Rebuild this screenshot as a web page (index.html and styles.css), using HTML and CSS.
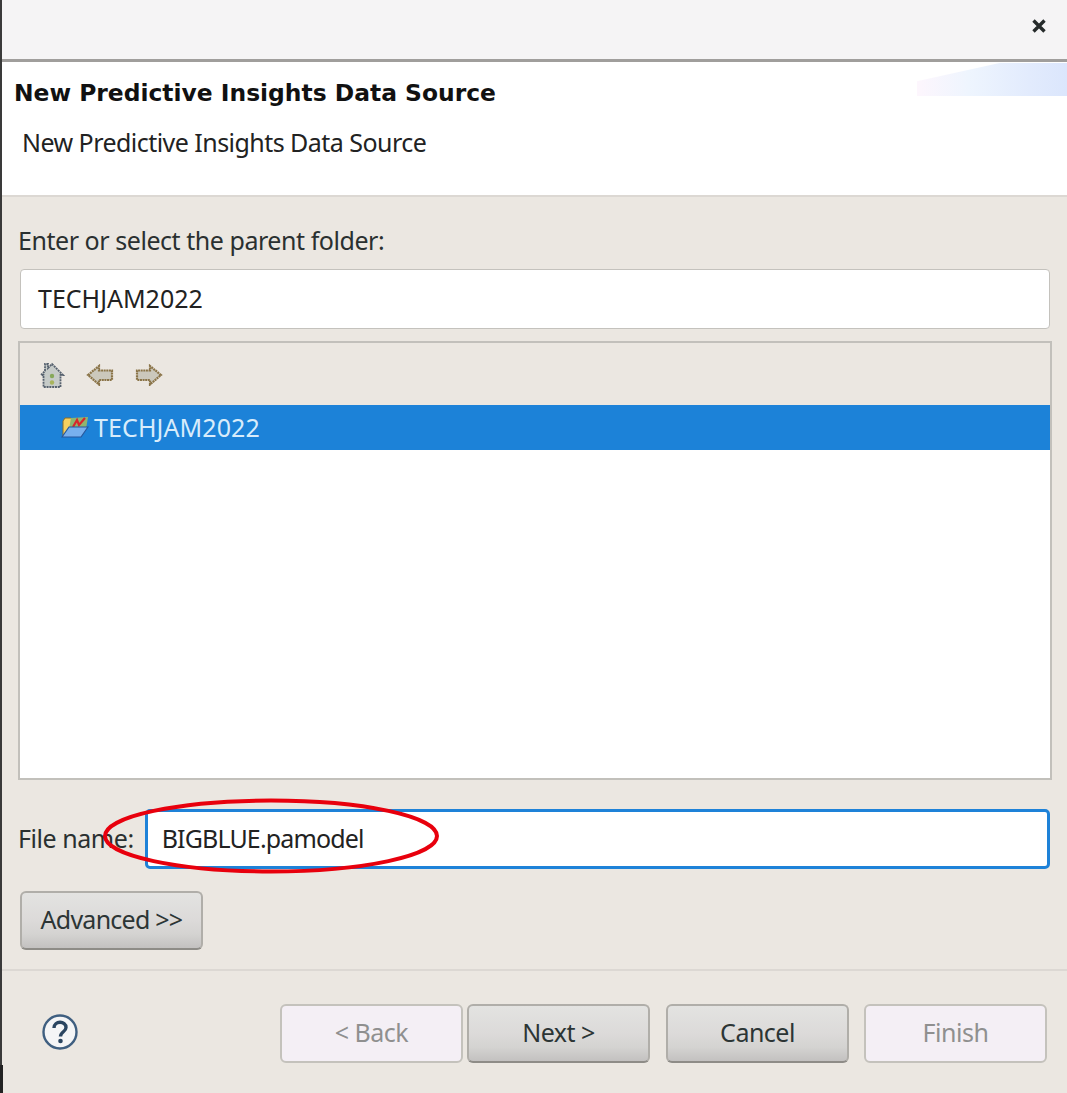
FILE: index.html
```html
<!DOCTYPE html>
<html lang="en">
<head>
    <meta charset="UTF-8">
    <meta name="viewport" content="width=device-width, initial-scale=1.0">
    <title>New Predictive Insights Data Source</title>
    <link rel="stylesheet" href="styles.css">
</head>
<body>
    <div class="dialog">
        <div class="titlebar">
            <svg class="close" width="16" height="16" viewBox="0 0 16 16">
                <path d="M2.5 2.5 L13.5 13.5 M13.5 2.5 L2.5 13.5" stroke="#262b2b" stroke-width="3.4" fill="none"/>
            </svg>
        </div>

        <div class="banner">
            <div class="banner-art"></div>
            <h1>New Predictive Insights Data Source</h1>
            <p>New Predictive Insights Data Source</p>
        </div>

        <div class="content">
            <label class="parent-label">Enter or select the parent folder:</label>
            <div class="field parent-field">TECHJAM2022</div>

            <div class="tree">
                <div class="tree-toolbar">
                    <svg width="26" height="28" viewBox="0 0 26 28">
                        <path d="M13 3 L24 14 L21.5 14 L21.5 26 L4.5 26 L4.5 14 L2 14 L6 10 L6 3 L9 3 L9 7 Z" fill="#c6cbc8" stroke="#56616e" stroke-width="1.8" stroke-dasharray="2 .8"/>
                        <circle cx="13" cy="15" r="2.2" fill="#86a85a"/>
                        <circle cx="13" cy="21.5" r="2.2" fill="#a8b45c"/>
                    </svg>
                    <svg width="28" height="22" viewBox="0 0 28 22">
                        <path d="M2 11 L13 2 L13 6.5 L26 6.5 L26 16 L13 16 L13 20.5 Z" fill="#cbc8bc" stroke="#8a7448" stroke-width="2.2" stroke-dasharray="2 .6"/>
                    </svg>
                    <svg width="28" height="22" viewBox="0 0 28 22">
                        <path d="M26 11 L15 2 L15 6.5 L2 6.5 L2 16 L15 16 L15 20.5 Z" fill="#cbc8bc" stroke="#8a7448" stroke-width="2.2" stroke-dasharray="2 .6"/>
                    </svg>
                </div>
                <div class="tree-row">
                    <svg width="28" height="22" viewBox="0 0 28 22">
                        <path d="M2 20 L2 5 L4 2 L10 2 L12 4 L22 4 L22 10 L10 10 Z" fill="#f5d060" stroke="#8a6d28" stroke-width="1"/>
                        <path d="M10 2 L27 1 L25 13 L8 13 Z" fill="#8fb56f"/>
                        <path d="M12 11 L16 4 L18 9 L24 2" fill="none" stroke="#d8262c" stroke-width="2.2"/>
                        <path d="M1 21 L8 11 L27 11 L20 21 Z" fill="#78b0ee" stroke="#27579c" stroke-width="1.2"/>
                    </svg>
                    <span>TECHJAM2022</span>
                </div>
                <div class="tree-body"></div>
            </div>

            <div class="file-row">
                <label>File name:</label>
                <div class="field file-field">BIGBLUE.pamodel</div>
            </div>

            <button class="btn advanced" type="button">Advanced &gt;&gt;</button>
        </div>

        <div class="footer">
            <svg class="help" width="38" height="38" viewBox="0 0 38 38">
                <circle cx="19" cy="19" r="16.5" fill="#f4f5f6" stroke="#3f5f80" stroke-width="2.4"/>
                <path d="M13 15 C13 7.5 25 7.5 25 14.5 C25 19 19.5 18.5 19.5 23.5" fill="none" stroke="#2a4560" stroke-width="3.4"/>
                <circle cx="19.5" cy="28" r="2.3" fill="#2a4560"/>
            </svg>
            <div class="buttons">
                <button class="btn" type="button" disabled>&lt; Back</button>
                <button class="btn" type="button">Next &gt;</button>
                <button class="btn cancel" type="button">Cancel</button>
                <button class="btn" type="button" disabled>Finish</button>
            </div>
        </div>

        <svg class="callout" width="340" height="82" viewBox="0 0 340 82">
            <ellipse cx="170" cy="41" rx="166" ry="35.5" fill="none" stroke="#e8000d" stroke-width="4"/>
        </svg>
    </div>
</body>
</html>
```

FILE: styles.css
```css
* {
    box-sizing: border-box;
}

html, body {
    margin: 0;
    height: 100%;
}

body {
    font-family: "Noto Sans", sans-serif;
    font-size: 25px;
    letter-spacing: -0.45px;
    color: #2a3030;
    background-color: #ebe7e1;
    overflow: hidden;
}

.dialog {
    position: relative;
    height: 1093px;
    border-left: 2px solid #3a3a3a;
    background-color: #ebe7e1;
}

.dialog::after {
    content: "";
    position: absolute;
    left: -2px;
    top: 1065px;
    width: 3px;
    height: 28px;
    background-color: #222;
}

.titlebar {
    display: flex;
    justify-content: flex-end;
    align-items: center;
    height: 62px;
    padding: 0 20px 7px 0;
    background-color: #f5f4f5;
    border-bottom: 3px solid #a09e9c;
}

.banner {
    position: relative;
    height: 135px;
    padding-left: 12px;
    background-color: #fff;
    border-bottom: 2px solid #dcd8d3;
}

.banner-art {
    position: absolute;
    top: 1px;
    right: 0;
    width: 150px;
    height: 33px;
    background: linear-gradient(90deg, #fdf6fd, #eef5fe 35%, #e2ebfd 75%, #dbe6fc);
    clip-path: polygon(0 55%, 55% 0, 100% 0, 100% 100%, 0 100%);
}

.banner h1 {
    margin: 0;
    padding-top: 15px;
    font-family: "DejaVu Sans", sans-serif;
    font-size: 23.4px;
    line-height: 32px;
    font-weight: bold;
    letter-spacing: 0;
    color: #111;
}

.banner p {
    margin: 0;
    padding: 16px 0 0 8px;
    line-height: 34px;
    letter-spacing: -0.54px;
    color: #222;
}

.content {
    padding: 0 15px 0 16px;
    height: 774px;
    border-bottom: 2px solid #dcd8d3;
}

.parent-label {
    display: block;
    padding-top: 26px;
    line-height: 34px;
}

.field {
    display: flex;
    align-items: center;
    background-color: #fff;
    border: 1px solid #c4c2bd;
    border-radius: 4px;
    color: #222;
}

.parent-field {
    height: 60px;
    margin: 12px 2px 12px 2px;
    padding: 0 0 3px 17px;
    letter-spacing: 0;
}

.tree {
    height: 439px;
    border: 2px solid #c2c0bb;
    background-color: #fff;
}

.tree-toolbar {
    display: flex;
    align-items: center;
    gap: 21px;
    height: 62px;
    padding: 2px 0 0 19px;
    background-color: #ebe7e1;
}

.tree-row {
    display: flex;
    align-items: center;
    gap: 5px;
    height: 45px;
    padding: 0 0 1px 41px;
    background-color: #1c82d8;
    color: #d8ecfb;
    letter-spacing: 0.1px;
}

.file-row {
    display: flex;
    align-items: center;
    gap: 11px;
    margin-top: 29px;
    padding-right: 2px;
}

.file-row label {
    padding-bottom: 3px;
}

.file-field {
    flex: 1;
    height: 60px;
    padding: 0 0 3px 14px;
    border: 3px solid #1e82d8;
    border-radius: 5px;
    letter-spacing: -0.85px;
}

.btn {
    width: 183px;
    height: 59px;
    padding: 0 0 3px;
    font-family: "Noto Sans", sans-serif;
    font-size: 25px;
    letter-spacing: -0.5px;
    color: #2c3535;
    background: linear-gradient(#e3e3e1, #dcdad9 50%, #d4d3d1 75%, #c3c1c0);
    border: 2px solid #b0aea9;
    border-bottom-color: #8e8c87;
    border-radius: 6px;
}

.btn:disabled {
    color: #8f8f8f;
    background: #f4eff5;
    border-color: #c4c2bc;
}

.advanced {
    display: block;
    margin: 22px 0 0 2px;
    letter-spacing: -0.75px;
}

.footer {
    display: flex;
    align-items: flex-start;
    justify-content: space-between;
    padding: 33px 20px 0 39px;
}

.help {
    margin-top: 9px;
}

.buttons {
    display: flex;
    gap: 4px;
}

.cancel {
    margin: 0 11px 0 12px;
}

.callout {
    position: absolute;
    left: 99px;
    top: 795px;
}
```
